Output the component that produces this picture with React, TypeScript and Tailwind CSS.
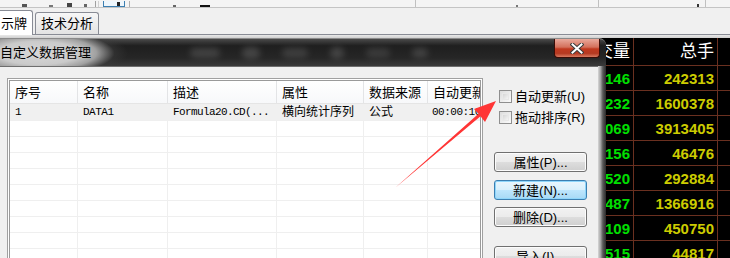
import React from "react";

const rows: [string, string][] = [
  ["146", "242313"],
  ["232", "1600378"],
  ["069", "3913405"],
  ["156", "46476"],
  ["520", "292884"],
  ["487", "1366916"],
  ["109", "450750"],
  ["515", "44817"],
];

function Checkbox({ label }: { label: string }) {
  return (
    <div className="flex items-center h-[13px] ml-[5px]">
      <div className="w-[13px] h-[13px] border border-[#8f8f8f] bg-[linear-gradient(135deg,#dcdcdc,#fbfbfb)] p-[2px]">
        <div className="w-full h-full bg-[linear-gradient(135deg,#d6d6d6,#f4f4f4)] border border-[#e8e8e8]" />
      </div>
      <span className="ml-[3px] text-[13px] leading-none text-black">{label}</span>
    </div>
  );
}

function Btn({ label, primary }: { label: string; primary?: boolean }) {
  return (
    <div
      className={
        primary
          ? "w-[93px] h-[20px] rounded-[3px] border border-[#3c7fb1] bg-[linear-gradient(to_bottom,#eaf6fd_0%,#d9f0fc_50%,#bee6fd_51%,#a7d9f5_100%)] shadow-[inset_0_0_0_1px_#8fd6fb] flex items-center justify-center text-[13px] leading-none text-black"
          : "w-[93px] h-[20px] rounded-[3px] border border-[#707070] bg-[linear-gradient(to_bottom,#f2f2f2_0%,#ebebeb_50%,#dddddd_51%,#cfcfcf_100%)] shadow-[inset_0_0_0_1px_#fcfcfc] flex items-center justify-center text-[13px] leading-none text-black"
      }
    >
      {label}
    </div>
  );
}

export default function App() {
  const emptyRows = Array.from({ length: 9 });
  return (
    <div className="relative w-[730px] h-[258px] overflow-hidden bg-[#f0f0f0] flex flex-col font-['Liberation_Sans','Noto_Sans_CJK_SC',sans-serif]">
      {/* toolbar strip */}
      <div className="h-[8px] border-b border-[#c4c4c4] bg-[#f4f4f4] flex items-end shrink-0">
        <div className="ml-[22px] w-[5px] h-[3px] bg-[#555]" />
        <div className="ml-[22px] w-[4px] h-[2px] bg-[#777]" />
        <div className="ml-[14px] w-[5px] h-[4px] bg-[#444]" />
        <div className="ml-[12px] w-[3px] h-[3px] bg-[#666]" />
        <div className="ml-[8px] w-px h-[6px] bg-[#a0a0a0]" />
        <div className="ml-[2px] w-px h-[6px] bg-[#d0d0d0]" />
        <div className="ml-[4px] w-[22px] h-[6px] border border-t-0 border-[#3c7fb1] bg-[#eef6fc] flex justify-end items-end">
          <div className="w-[3px] h-[4px] bg-[#222] mr-[4px]" />
        </div>
        <div className="ml-[4px] w-px h-[6px] bg-[#b0b0b0]" />
        <div className="ml-[43px] w-[3px] h-[2px] bg-[#666]" />
        <div className="ml-[24px] w-[10px] h-[2px] bg-[#111]" />
        <div className="ml-[205px] w-px h-[7px] bg-[#c0c0c0]" />
        <div className="ml-[100px] w-[2px] h-[2px] bg-[#777]" />
        <div className="ml-[80px] w-px h-[7px] bg-[#c0c0c0]" />
        <div className="ml-[98px] w-[2px] h-[3px] bg-[#333]" />
        <div className="ml-[6px] w-px h-[7px] bg-[#c0c0c0]" />
      </div>

      {/* tabs */}
      <div className="h-[27px] shrink-0 flex items-end border-b border-[#898c95] bg-[#f0f0f0]">
        <div className="w-[33px] h-[25px] -mb-px bg-white border border-l-0 border-b-0 border-[#898c95] rounded-tr-[3px] flex items-center text-[13px] text-black pl-[1px] leading-none">
          示牌
        </div>
        <div className="ml-[2px] w-[64px] h-[22px] bg-[linear-gradient(to_bottom,#f7f7f7,#e3e3e3)] border border-b-0 border-[#898c95] rounded-t-[3px] flex items-center justify-center text-[13px] text-black leading-none">
          技术分析
        </div>
      </div>

      {/* shadow gap */}
      <div className="h-[3px] shrink-0 bg-[linear-gradient(to_bottom,#e9e9e9,#cfcfcf)]" />

      {/* main */}
      <div className="flex-1 flex bg-black min-h-0">
        {/* dialog */}
        <div className="w-[606px] shrink-0 flex flex-col">
          {/* title bar */}
          <div className="h-[28px] shrink-0 rounded-tr-[7px] border-t border-[#8a8a8a] bg-[radial-gradient(ellipse_90px_26px_at_38px_14px,#d8d8d8_0%,#cacaca_45%,#a0a0a0_65%,rgba(60,60,60,0.5)_85%,rgba(40,40,40,0)_100%),linear-gradient(to_bottom,#4a4a4a_0%,#1f1f1f_25%,#262626_70%,#3a3a3a_100%)] flex items-start">
            <div className="h-[27px] flex items-center w-[100px] shrink-0">
              <span className="text-[13px] leading-none text-black whitespace-nowrap">自定义数据管理</span>
            </div>
            <div className="flex-1 flex items-center h-[27px] gap-[22px] pl-[90px] opacity-60 overflow-hidden">
              <div className="w-[30px] h-[10px] rounded-full bg-[#555] blur-[3px]" />
              <div className="w-[18px] h-[12px] rounded-full bg-[#5a5a5a] blur-[3px]" />
              <div className="w-[26px] h-[10px] rounded-full bg-[#505050] blur-[3px]" />
              <div className="w-[14px] h-[12px] rounded-full bg-[#5a5a5a] blur-[3px]" />
              <div className="w-[24px] h-[10px] rounded-full bg-[#4a4a4a] blur-[3px]" />
              <div className="w-[16px] h-[10px] rounded-full bg-[#555] blur-[3px]" />
            </div>
            <div className="mr-[6px] w-[46px] h-[19px] rounded-b-[4px] border border-t-0 border-[#3a0c06] bg-[linear-gradient(to_bottom,#e9a99b_0%,#d4715c_45%,#c0391f_55%,#b53a22_80%,#d87a60_100%)] flex items-center justify-center">
              <svg width="14" height="11" viewBox="0 0 14 11">
                <path d="M2.5 1.5 L11.5 9.5 M11.5 1.5 L2.5 9.5" stroke="#3a3a3a" strokeWidth="4" strokeLinecap="square" />
                <path d="M2.5 1.5 L11.5 9.5 M11.5 1.5 L2.5 9.5" stroke="#ffffff" strokeWidth="2" strokeLinecap="square" />
              </svg>
            </div>
          </div>

          {/* body */}
          <div className="flex-1 flex min-h-0">
            <div className="flex-1 bg-[#f0f0f0] border-t border-[#6e6e6e] flex pt-[11px] pl-[7px] min-h-0 overflow-hidden">
              {/* list */}
              <div className="w-[476px] h-[200px] border border-b-0 border-[#a0a0a0] bg-white pl-px pt-px pr-px shrink-0">
                <div className="w-full h-full border border-b-0 border-[#9a9a9a] bg-white flex flex-col overflow-hidden">
                  {/* header */}
                  <div className="h-[23px] shrink-0 flex border-b border-[#e5e5e5] bg-[linear-gradient(to_bottom,#ffffff,#f7f8fa)] text-[13px] leading-none text-black">
                    <div className="w-[68px] shrink-0 border-r border-[#e3e4e6] flex items-center pl-[5px]">序号</div>
                    <div className="w-[90px] shrink-0 border-r border-[#e3e4e6] flex items-center pl-[5px]">名称</div>
                    <div className="w-[109px] shrink-0 border-r border-[#e3e4e6] flex items-center pl-[5px]">描述</div>
                    <div className="w-[87px] shrink-0 border-r border-[#e3e4e6] flex items-center pl-[5px]">属性</div>
                    <div className="w-[64px] shrink-0 border-r border-[#e3e4e6] flex items-center pl-[5px]">数据来源</div>
                    <div className="flex-1 min-w-0 flex items-center pl-[5px] whitespace-nowrap">自动更新</div>
                  </div>
                  {/* data row */}
                  <div className="h-[16px] shrink-0 flex bg-[#f0f0f0] text-black leading-none">
                    <div className="w-[68px] shrink-0 flex items-center pl-[5px] text-[11px] font-['Liberation_Mono',monospace]">1</div>
                    <div className="w-[90px] shrink-0 flex items-center pl-[5px] text-[11px] tracking-[-0.5px] font-['Liberation_Mono',monospace]">DATA1</div>
                    <div className="w-[109px] shrink-0 flex items-center pl-[5px] text-[11px] tracking-[-0.6px] font-['Liberation_Mono',monospace] whitespace-nowrap">Formula20.CD(...</div>
                    <div className="w-[87px] shrink-0 flex items-center pl-[5px] text-[12px]">横向统计序列</div>
                    <div className="w-[64px] shrink-0 flex items-center pl-[5px] text-[12px]">公式</div>
                    <div className="flex-1 min-w-0 flex items-center pl-[4px] text-[11px] tracking-[-0.5px] font-['Liberation_Mono',monospace] whitespace-nowrap">00:00:10</div>
                  </div>
                  {emptyRows.map((_, i) => (
                    <div key={i} className="h-[16px] shrink-0 flex border-t border-[#efefef]">
                      <div className="w-[68px] shrink-0 border-r border-[#efefef]" />
                      <div className="w-[90px] shrink-0 border-r border-[#efefef]" />
                      <div className="w-[109px] shrink-0 border-r border-[#efefef]" />
                      <div className="w-[87px] shrink-0 border-r border-[#efefef]" />
                      <div className="w-[64px] shrink-0 border-r border-[#efefef]" />
                      <div className="flex-1" />
                    </div>
                  ))}
                </div>
              </div>

              {/* right controls */}
              <div className="flex-1 flex flex-col pl-[11px]">
                <div className="mt-[12px]">
                  <Checkbox label="自动更新(U)" />
                </div>
                <div className="mt-[8px]">
                  <Checkbox label="拖动排序(R)" />
                </div>
                <div className="mt-[28px]">
                  <Btn label="属性(P)..." />
                </div>
                <div className="mt-[8px]">
                  <Btn label="新建(N)..." primary />
                </div>
                <div className="mt-[7px]">
                  <Btn label="删除(D)..." />
                </div>
                <div className="mt-[19px]">
                  <Btn label="导入(I)..." />
                </div>
              </div>
            </div>
            {/* right frame */}
            <div className="w-[8px] shrink-0 bg-[linear-gradient(to_right,#d8d8d8_0%,#a8a8a8_30%,#5a5a5a_60%,#2a2a2a_100%)]" />
          </div>
        </div>

        {/* black quote panel */}
        <div className="flex-1 flex flex-col bg-black min-w-0">
          <div className="h-[28px] shrink-0 flex border-b border-[#6a3020] text-white text-[17px] leading-none">
            <div className="w-[28px] shrink-0 border-r border-[#6a3020] flex items-center justify-end overflow-hidden pr-[3px] whitespace-nowrap">成交量</div>
            <div className="w-[84px] shrink-0 border-r border-[#6a3020] flex items-center justify-end pr-[3px]">总手</div>
            <div className="flex-1" />
          </div>
          {rows.map(([a, b], i) => (
            <div key={i} className="h-[25px] shrink-0 flex border-b border-[#6a3020] font-bold text-[15px] leading-none font-['Liberation_Sans',sans-serif]">
              <div className="w-[28px] shrink-0 border-r border-[#6a3020] flex items-center justify-end overflow-hidden pr-[3px] text-[#00e000]">{a}</div>
              <div className="w-[84px] shrink-0 border-r border-[#6a3020] flex items-center justify-end pr-[3px] text-[#cccc00]">{b}</div>
              <div className="flex-1" />
            </div>
          ))}
        </div>
      </div>

      {/* red annotation arrow */}
      <svg className="absolute left-0 top-0 pointer-events-none" width="730" height="258" viewBox="0 0 730 258">
        <polygon points="395,188 478.5,113.8 474,109 496,101 485,122 480.5,116.2" fill="#ff3535" />
      </svg>
    </div>
  );
}
